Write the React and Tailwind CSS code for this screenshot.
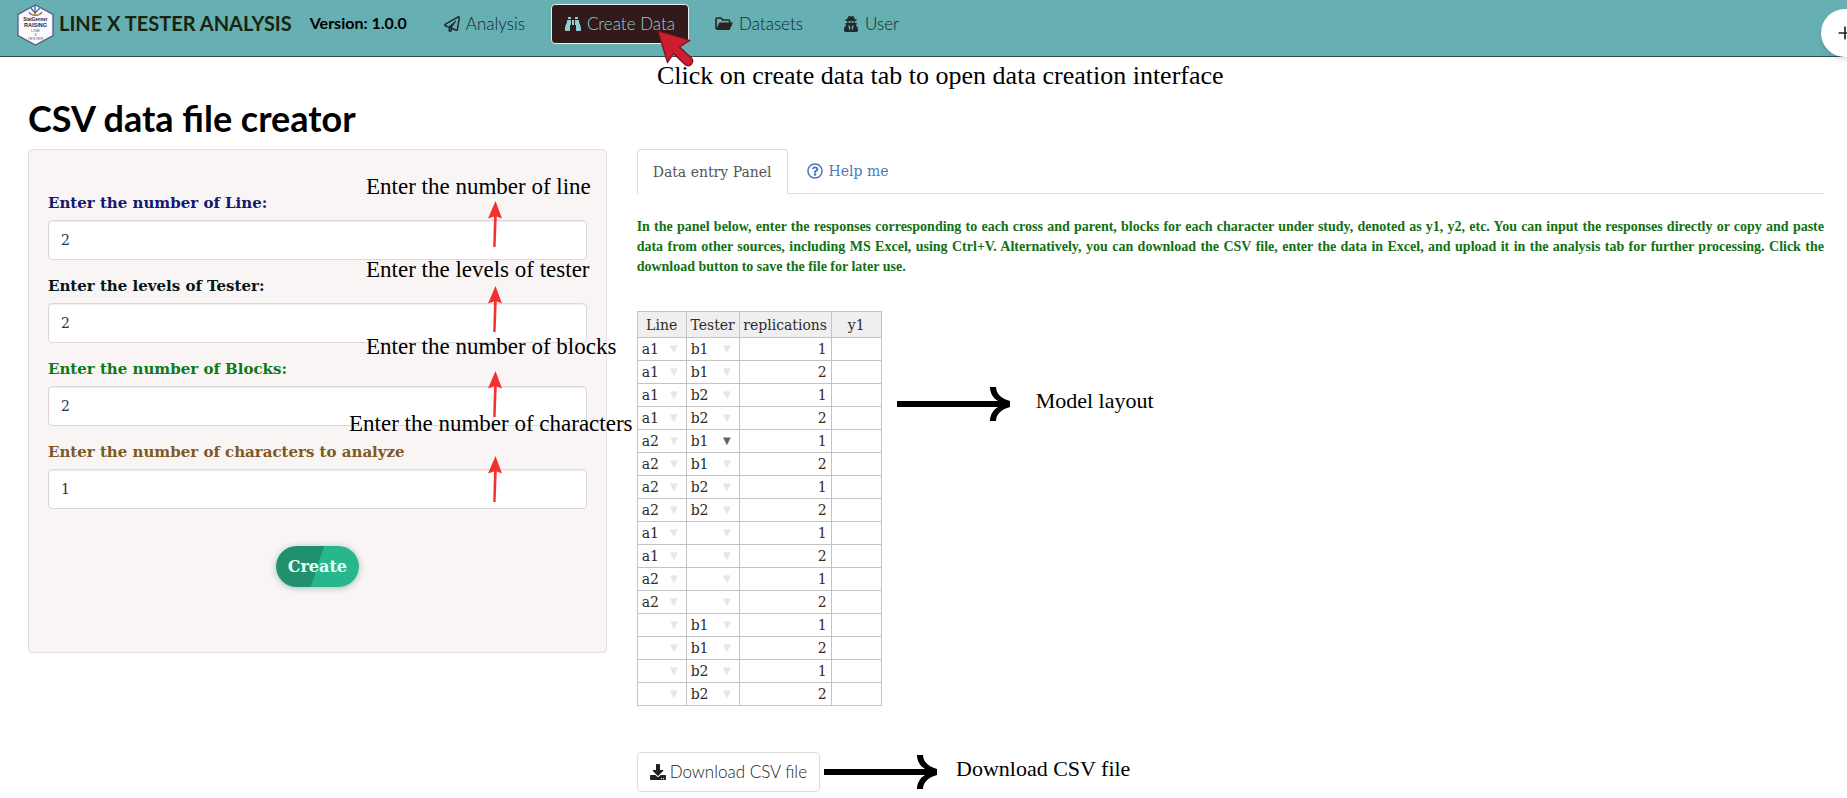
import React from 'react';
import { Plus } from 'lucide-react';
import { FaRegPaperPlane, FaBinoculars, FaUserSecret, FaDownload, FaRegQuestionCircle } from 'react-icons/fa';

const fields = [
  { id: 'lines', label: 'Enter the number of Line:', value: 2, color: 'text-[#15186e]', note: 'Enter the number of line', noteClass: '-top-5 left-[318px]', arrowClass: 'top-2' },
  { id: 'testers', label: 'Enter the levels of Tester:', value: 2, color: 'text-[#06141a]', note: 'Enter the levels of tester', noteClass: '-top-5 left-[318px]', arrowClass: 'top-2.5' },
  { id: 'blocks', label: 'Enter the number of Blocks:', value: 2, color: 'text-[#0f7a14]', note: 'Enter the number of blocks', noteClass: '-top-[26px] left-[318px]', arrowClass: 'top-3' },
  { id: 'characters', label: 'Enter the number of characters to analyze', value: 1, color: 'text-[#80591f]', note: 'Enter the number of characters', noteClass: '-top-8 left-[301px]', arrowClass: 'top-3.5' },
];

const rows = [
  ['a1', 'b1', 1],
  ['a1', 'b1', 2],
  ['a1', 'b2', 1],
  ['a1', 'b2', 2],
  ['a2', 'b1', 1],
  ['a2', 'b1', 2],
  ['a2', 'b2', 1],
  ['a2', 'b2', 2],
  ['a1', '', 1],
  ['a1', '', 2],
  ['a2', '', 1],
  ['a2', '', 2],
  ['', 'b1', 1],
  ['', 'b1', 2],
  ['', 'b2', 1],
  ['', 'b2', 2],
];

const activeRow = 4;

const Logo = () => (
  <svg viewBox="0 0 37 42" className="w-[37px] h-[42px] shrink-0" aria-label="Raising logo">
    <path d="M18.5 1 36 10.5v21L18.5 41 1 31.500v-21z" fill="#fbfbfd" stroke="#5b5a86" strokeWidth="1.300" />
    <path d="M18 2v10M14 4l4 5 5-5M12 8c2 4 10 5 13 0" fill="none" stroke="#4b6fa5" strokeWidth="1.400" />
    <path d="M14 9.500c2 2 6 2 9 0" fill="none" stroke="#d9a441" strokeWidth="1.200" />
    <g textAnchor="middle" fontFamily="Liberation Sans" fill="#22254a">
      <text x="18.500" y="17" fontSize="4.500" fontWeight="700">StatGenner</text>
      <text x="18.500" y="22.500" fontSize="5.500" fontWeight="700">RAISING</text>
      <text x="18.500" y="28" fontSize="4" fill="#555a75">LINE</text>
      <text x="18.500" y="32" fontSize="4" fill="#555a75">X</text>
      <text x="18.500" y="36" fontSize="4" fill="#555a75">TESTER</text>
    </g>
  </svg>
);

const FolderIcon = () => (
  <svg viewBox="0 0 18 14" className="w-[18px] h-[14px]">
    <path d="M1 12V2.200Q1 1 2.200 1H6l1.800 2h5.700q1.200 0 1.200 1.200V6" fill="none" stroke="#2b2222" strokeWidth="1.600" />
    <path d="M4.300 5.500H18L14.600 13H1z" fill="#2b2222" />
  </svg>
);

const RedArrow = ({ className }) => (
  <svg viewBox="0 0 14 46" className={`absolute left-[440px] w-[14px] h-[46px] ${className}`}>
    <path d="M7.500 0 14 17.500 8.800 15.500 7.600 46H5.200L6 15.500 0 17.500z" fill="#f3322f" />
  </svg>
);

const BlackArrow = () => (
  <svg viewBox="0 0 114 34" className="w-[114px] h-[34px] shrink-0">
    <path d="M0 14H101C96 11 93 6 93 0h6c0 7 6 12 14 14v6C105 22 99 27 99 34h-6c0-6 3-11 8-14H0z" />
  </svg>
);

const Cursor = () => (
  <svg viewBox="0 0 38 38" className="w-[38px] h-[38px]">
    <path d="M1 1 33 10.500 22.500 17 34.500 28Q37 31 34.500 34T28.500 35L16.500 23.500 10.500 32.500z" fill="#cf1d30" stroke="#7a1420" strokeWidth="1.300" strokeLinejoin="round" />
  </svg>
);

const NavLink = ({ icon, children, active }) => (
  <a
    href="#"
    className={`flex items-center gap-[6px] h-10 px-[13px] rounded border text-[17px] font-light ${
      active ? 'bg-[#331a1a] border-[#e6efef] text-[#8fd0d2]' : 'border-transparent text-[#12292b]'
    }`}
  >
    {icon}
    {children}
  </a>
);

const Navbar = () => (
  <header className="relative h-[57px] bg-[#66afb2] border-b border-[#2f4f50]">
    <div className="flex items-start gap-[5px] pl-[17px] pt-1">
      <Logo />
      <div className="flex items-center h-[38px]">
        <a href="#" className="text-xl font-bold text-[#18240f] whitespace-nowrap">LINE X TESTER ANALYSIS</a>
        <span className="ml-[18px] text-base font-bold text-black">Version: 1.0.0</span>
      </div>
      <nav className="flex gap-3 ml-[18px]">
        <NavLink icon={<FaRegPaperPlane className="size-4 text-[#22282b]" />}>Analysis</NavLink>
        <div className="relative">
          <NavLink active icon={<FaBinoculars className="size-4" />}>Create Data</NavLink>
          <div className="absolute z-10 top-[26px] left-[106px]">
            <Cursor />
            <p className="-mt-[6px] font-['Liberation_Serif',serif] text-[26px] leading-7 text-black whitespace-nowrap">
              Click on create data tab to open data creation interface
            </p>
          </div>
        </div>
        <NavLink icon={<FolderIcon />}>Datasets</NavLink>
        <NavLink icon={<FaUserSecret className="size-4 text-[#22282b]" />}>User</NavLink>
      </nav>
    </div>
    <button aria-label="Add" className="absolute top-[9px] -right-[22px] flex items-center justify-center size-12 rounded-full bg-white text-[#222] shadow-md">
      <Plus className="size-5" />
    </button>
  </header>
);

const Field = ({ field }) => (
  <div className="relative mb-4">
    <label htmlFor={field.id} className={`block mb-[7px] text-[15px] leading-5 font-bold ${field.color}`}>
      {field.label}
    </label>
    <input
      id={field.id}
      type="text"
      defaultValue={field.value}
      className="block w-full h-10 px-3 bg-white border border-[#dfd7d7] rounded text-sm text-[#333] shadow-[inset_0_1px_1px_rgba(0,0,0,0.07)]"
    />
    <span className={`absolute font-['Liberation_Serif',serif] text-[23px] leading-7 text-black whitespace-nowrap ${field.noteClass}`}>
      {field.note}
    </span>
    <RedArrow className={field.arrowClass} />
  </div>
);

const DropdownCell = ({ value, active }) => (
  <td className="p-0 border border-[#c4c4c4]">
    <div className="flex items-center justify-between pl-1 pr-2">
      {value}
      <button aria-label="Open options" className={`ml-auto text-[10px] leading-none ${active ? 'text-[#666]' : 'text-[#e6e6e6]'}`}>▼</button>
    </div>
  </td>
);

const DataTable = () => (
  <table className="table-fixed w-[245px] border-collapse text-sm leading-[22px] text-[#2c2c2c]">
    <colgroup>
      <col className="w-[49px]" />
      <col className="w-[53px]" />
      <col className="w-[92px]" />
      <col className="w-[50px]" />
    </colgroup>
    <thead>
      <tr className="h-[26px] bg-[#efefef]">
        {['Line', 'Tester', 'replications', 'y1'].map((h) => (
          <th key={h} className="p-0 border border-[#c4c4c4] font-normal text-center">{h}</th>
        ))}
      </tr>
    </thead>
    <tbody>
      {rows.map(([line, tester, rep], i) => (
        <tr key={i} className="h-[23px]">
          <DropdownCell value={line} />
          <DropdownCell value={tester} active={i === activeRow} />
          <td className="py-0 px-1 border border-[#c4c4c4] text-right">{rep}</td>
          <td className="p-0 border border-[#c4c4c4]" />
        </tr>
      ))}
    </tbody>
  </table>
);

const App = () => {
  return (
    <div className="overflow-x-clip bg-white font-['Lato',sans-serif]">
      <Navbar />
      <main className="pl-[13px] pr-2">
        <h2 className="mt-[41px] mb-[11px] px-[15px] text-4xl leading-10 font-bold text-black">CSV data file creator</h2>
        <div className="grid grid-cols-3 items-start">
          <div className="px-[15px] font-['DejaVu_Serif',serif]">
            <form className="px-[19px] pt-[43px] pb-[65px] bg-[#f8f5f4] border border-[#e3e0e0] rounded">
              {fields.map((f) => <Field key={f.id} field={f} />)}
              <div className="flex justify-center pt-[21px]">
                <button
                  type="button"
                  className="h-[41px] px-3 rounded-full bg-[linear-gradient(108deg,#21906f_50%,#28b78d_50%)] text-base font-bold text-[#e9fff8] shadow-[0_1px_6px_rgba(60,120,100,0.45)]"
                >
                  Create
                </button>
              </div>
            </form>
          </div>

          <div className="col-span-2 px-[15px] font-['DejaVu_Serif',serif]">
            <div className="flex border-b border-[#dcdcdc] text-sm">
              <button className="h-[45px] -mb-px px-[15px] bg-white border border-b-0 border-[#dcdcdc] rounded-t text-[#555]">
                Data entry Panel
              </button>
              <button className="flex items-center gap-[6px] h-[43px] px-[19px] text-[#4a78bf]">
                <FaRegQuestionCircle className="size-4" />
                Help me
              </button>
            </div>

            <p className="mt-[23px] font-['Liberation_Serif',serif] text-sm leading-5 font-bold text-justify text-[#137013]">
              In the panel below, enter the responses corresponding to each cross and parent, blocks for each character under study, denoted as y1, y2, etc. You can input the responses directly or copy and paste data from other sources, including MS Excel, using Ctrl+V. Alternatively, you can download the CSV file, enter the data in Excel, and upload it in the analysis tab for further processing. Click the download button to save the file for later use.
            </p>

            <div className="flex items-start mt-[34px] gap-[15px]">
              <DataTable />
              <div className="flex items-start gap-[25px] pt-[76px]">
                <BlackArrow />
                <span className="font-['Liberation_Serif',serif] text-[22px] leading-7 text-black">Model layout</span>
              </div>
            </div>

            <div className="flex items-center mt-[46px]">
              <button className="flex items-center gap-1 h-10 px-3 bg-white border border-[#dcdcdc] rounded font-['Lato',sans-serif] text-[17px] font-light text-[#222]">
                <FaDownload className="size-4" />
                Download CSV file
              </button>
              <div className="flex items-start gap-[18px] ml-1">
                <BlackArrow />
                <span className="font-['Liberation_Serif',serif] text-[22px] leading-7 text-black">Download CSV file</span>
              </div>
            </div>
          </div>
        </div>
      </main>
    </div>
  );
};

export default App;
